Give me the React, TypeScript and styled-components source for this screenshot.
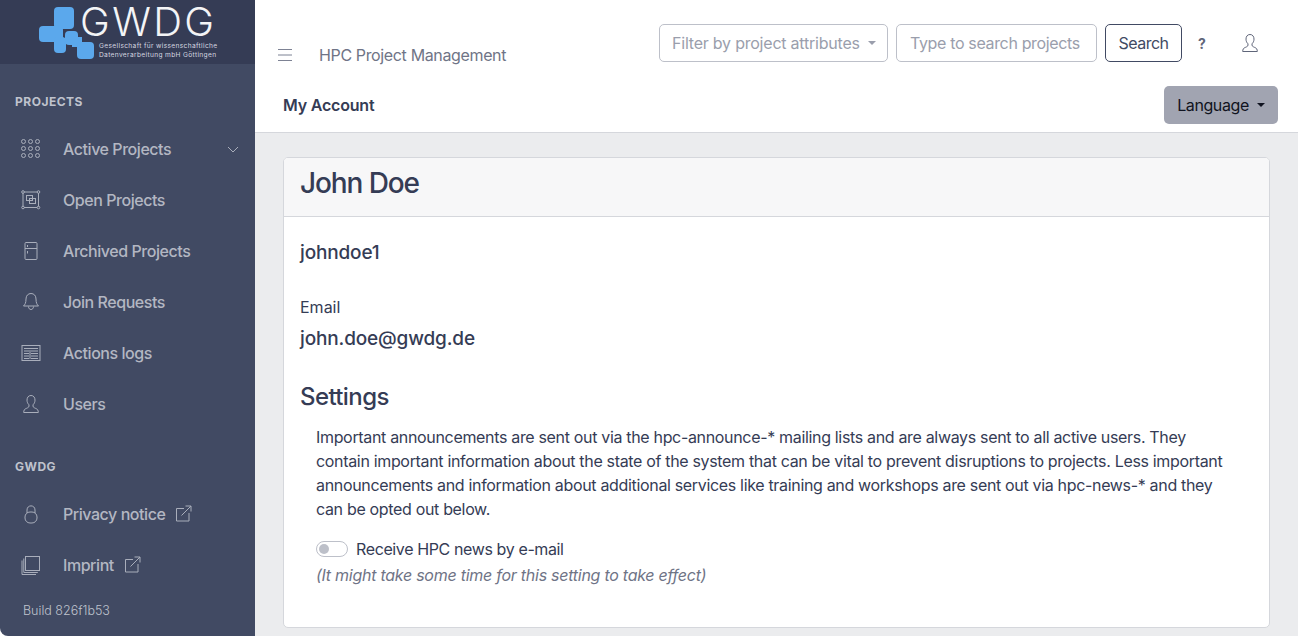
import React from 'react';
import styled, { createGlobalStyle } from 'styled-components';

const GlobalStyle = createGlobalStyle`
  html, body {
    margin: 0;
    padding: 0;
    height: 100%;
    background: #fff;
    overflow: hidden;
  }
  body {
    font-family: Inter, "Liberation Sans", sans-serif;
    color: #353c55;
  }
`;

const Page = styled.div`
  display: flex;
  width: 1298px;
  height: 636px;
`;

const Sidebar = styled.aside`
  width: 255px;
  flex: none;
  display: flex;
  flex-direction: column;
  background: #414a63;
  border-bottom-left-radius: 8px;
`;

const LogoBar = styled.div`
  height: 64px;
  flex: none;
  display: flex;
  align-items: flex-start;
  padding: 7px 0 0 39px;
  box-sizing: border-box;
  background: #353c55;
`;

const LogoText = styled.div`
  margin: -1px 0 0 -15px;
  color: #f3f4f6;
`;

const LogoName = styled.div`
  font-size: 40px;
  font-weight: 300;
  line-height: 32px;
  letter-spacing: 2.4px;
`;

const LogoSub = styled.div`
  margin: 4px 0 0 19px;
  font-size: 6.6px;
  line-height: 8.5px;
  letter-spacing: 0.35px;
  white-space: nowrap;
  color: #d5d8e0;
`;

const SectionLabel = styled.div`
  padding: 30px 0 13px 15px;
  font-size: 12px;
  font-weight: 700;
  line-height: 16px;
  letter-spacing: 0.5px;
  color: #bfc3cd;
`;

const NavList = styled.nav`
  display: flex;
  flex-direction: column;
`;

const NavItem = styled.a`
  height: 51px;
  display: flex;
  align-items: center;
  padding: 0 16px 0 21px;
  font-size: 16px;
  font-weight: 500;
  letter-spacing: -0.45px;
  color: #b3b7c2;
`;

const NavIcon = styled.svg`
  width: 20px;
  height: 20px;
  flex: none;
  margin-right: 22px;
  fill: none;
  stroke: #a9aebb;
  stroke-width: 1;
`;

const SmallIcon = styled.svg`
  width: 17px;
  height: 17px;
  flex: none;
  margin-left: 10px;
  fill: none;
  stroke: #a9aebb;
  stroke-width: 1;
`;

const Chevron = styled.svg`
  width: 12px;
  height: 12px;
  margin-left: auto;
  fill: none;
  stroke: #a9aebb;
  stroke-width: 1;
`;

const Build = styled.div`
  margin-top: 12px;
  padding-left: 23px;
  font-size: 12.5px;
  font-weight: 300;
  line-height: 18px;
  color: #bfc3cd;
`;

const Main = styled.main`
  flex: 1;
  min-width: 0;
  display: flex;
  flex-direction: column;
  background: #ebecee;
`;

const TopBar = styled.header`
  height: 86px;
  flex: none;
  display: flex;
  align-items: flex-start;
  padding: 24px 38px 0 22px;
  box-sizing: border-box;
  background: #fff;
`;

const Burger = styled.svg`
  width: 16px;
  height: 16px;
  margin-top: 23px;
  fill: none;
  stroke: #7d8294;
  stroke-width: 1;
`;

const AppTitle = styled.div`
  margin: 22px 0 0 26px;
  font-size: 16px;
  line-height: 19px;
  letter-spacing: -0.36px;
  color: #6f7486;
`;

const Tools = styled.div`
  margin-left: auto;
  display: flex;
  align-items: center;
  gap: 8px;
`;

const Control = styled.div<{ $width: number; $spacing: number; $pad: number }>`
  width: ${(p) => p.$width}px;
  height: 38px;
  box-sizing: border-box;
  display: flex;
  align-items: center;
  padding: 0 ${(p) => p.$pad}px;
  border: 1px solid #bdc0c9;
  border-radius: 5px;
  font-size: 16px;
  letter-spacing: ${(p) => p.$spacing}px;
  color: #9a9eac;
  white-space: nowrap;
`;

const Caret = styled.span<{ $color: string }>`
  margin-left: 8px;
  border-top: 4px solid ${(p) => p.$color};
  border-left: 4px solid transparent;
  border-right: 4px solid transparent;
`;

const SearchButton = styled.button`
  width: 77px;
  height: 38px;
  padding: 0;
  background: #fff;
  border: 1px solid #414a63;
  border-radius: 5px;
  font: inherit;
  font-size: 16px;
  letter-spacing: -0.5px;
  color: #414a63;
`;

const Help = styled.span`
  width: 24px;
  text-align: center;
  font-size: 14px;
  font-weight: 700;
  color: #5f6579;
`;

const UserButton = styled.svg`
  margin-left: 18px;
  width: 20px;
  height: 20px;
  fill: none;
  stroke: #5f6579;
  stroke-width: 1;
`;

const SubBar = styled.div`
  height: 46px;
  flex: none;
  display: flex;
  align-items: flex-start;
  justify-content: space-between;
  padding: 0 20px 0 28px;
  background: #fff;
  border-bottom: 1px solid #d5d7dc;
`;

const PageTitle = styled.h1`
  margin: 10px 0 0;
  font-size: 16px;
  font-weight: 600;
  line-height: 19px;
  letter-spacing: -0.2px;
  color: #353c55;
`;

const LanguageButton = styled.button`
  width: 114px;
  height: 38px;
  display: flex;
  align-items: center;
  justify-content: center;
  padding: 0;
  border: none;
  border-radius: 5px;
  background: #a1a4b1;
  font: inherit;
  font-size: 16px;
  letter-spacing: -0.4px;
  color: #101320;
`;

const Content = styled.div`
  flex: 1;
  padding: 24px 28px 8px 28px;
  min-height: 0;
`;

const Card = styled.section`
  height: 100%;
  box-sizing: border-box;
  background: #fff;
  border: 1px solid #d5d7dc;
  border-radius: 5px;
  overflow: hidden;
`;

const CardHeader = styled.div`
  height: 59px;
  box-sizing: border-box;
  padding: 0 16px 8px;
  display: flex;
  align-items: center;
  background: #f7f7f8;
  border-bottom: 1px solid #d5d7dc;
`;

const Name = styled.h2`
  margin: 0;
  font-size: 28px;
  font-weight: 500;
  letter-spacing: -1.1px;
  color: #353c55;
`;

const CardBody = styled.div`
  padding: 24px 16px 0;
`;

const Value = styled.div<{ $bottom?: number }>`
  font-size: 19px;
  font-weight: 500;
  line-height: 24px;
  letter-spacing: -0.15px;
  margin-bottom: ${(p) => p.$bottom ?? 0}px;
`;

const FieldLabel = styled.div`
  font-size: 16px;
  line-height: 24px;
  margin-bottom: 8px;
`;

const SettingsTitle = styled.h3`
  margin: 31px 0 0;
  font-size: 24px;
  font-weight: 500;
  line-height: 29px;
  letter-spacing: -0.6px;
  color: #353c55;
`;

const Settings = styled.div`
  padding: 14px 0 0 16px;
`;

const Paragraph = styled.p`
  margin: 0;
  max-width: 915px;
  font-size: 16px;
  line-height: 24px;
  letter-spacing: -0.33px;
`;

const SwitchRow = styled.div`
  display: flex;
  align-items: center;
  margin-top: 16px;
  font-size: 16px;
  line-height: 24px;
  letter-spacing: -0.38px;
`;

const Switch = styled.span`
  position: relative;
  width: 32px;
  height: 16px;
  box-sizing: border-box;
  margin-right: 8px;
  border: 1px solid #bdc0c9;
  border-radius: 8px;

  &::after {
    content: '';
    position: absolute;
    left: 2px;
    top: 2px;
    width: 10px;
    height: 10px;
    border-radius: 50%;
    background: #bdc0c9;
  }
`;

const Note = styled.div`
  margin-top: 2px;
  font-size: 16px;
  font-style: italic;
  line-height: 24px;
  letter-spacing: -0.26px;
  color: #6f7486;
`;

const UserPath = () => (
  <path d="M10 1.500c-2.600 0-4 2-4 4.600 0 2 .8 3.600 1.900 4.600.3.900.2 1.900-.4 2.500-1 .9-3.400 1.500-4.200 2.600-.5.7-.6 2-.6 2.700h14.600c0-.7-.1-2-.6-2.700-.8-1.100-3.200-1.700-4.200-2.600-.6-.6-.7-1.600-.4-2.500C13.200 9.700 14 8.100 14 6.100c0-2.600-1.400-4.600-4-4.600z" />
);

const ExternalIcon = () => (
  <SmallIcon viewBox="0 0 17 17">
    <path d="M9 3.500H1.500v12.500h12.500V8" />
    <path d="M6.500 10.500L16 1M10.500 1H16v5.500" />
  </SmallIcon>
);

const items = [
  {
    label: 'Active Projects',
    chevron: true,
    icon: (
      <>
        {[2.5, 9.5, 16.5].map((y) =>
          [2.5, 9.5, 16.5].map((x) => <circle key={`${x}-${y}`} cx={x} cy={y} r="2" />)
        )}
      </>
    ),
  },
  {
    label: 'Open Projects',
    icon: (
      <>
        <path d="M3 2h13M3 17.500h13M2 3v13.500M17.500 3v13.500" />
        <circle cx="2" cy="2" r="1.300" />
        <circle cx="17.500" cy="2" r="1.300" />
        <circle cx="2" cy="17.500" r="1.300" />
        <circle cx="17.500" cy="17.500" r="1.300" />
        <rect x="5.500" y="5.500" width="6" height="5" />
        <rect x="8.500" y="8.500" width="6" height="5" />
      </>
    ),
  },
  {
    label: 'Archived Projects',
    icon: (
      <>
        <rect x="4" y="1.500" width="12" height="17" rx="1" />
        <path d="M4 7.500h12M6.500 4v2M6.500 10v2.500" />
      </>
    ),
  },
  {
    label: 'Join Requests',
    icon: (
      <>
        <path d="M10 1.500c-3 0-5 2.200-5 5.500 0 4-1 5.500-2.500 7h15C16 12.500 15 11 15 7c0-3.300-2-5.500-5-5.500z" />
        <path d="M7.500 14.500c0 4 5 4 5 0" />
      </>
    ),
  },
  {
    label: 'Actions logs',
    icon: (
      <>
        <rect x="1" y="2.500" width="18" height="15" />
        <path d="M3 5.500h14M3 8h5M3 10.500h5M3 13h5M3 15.500h5M10 8h7M10 10.500h7M10 13h7M10 15.500h7M9 7v9" />
      </>
    ),
  },
  { label: 'Users', icon: <UserPath /> },
];

const LogoMark = () => (
  <svg width="56" height="52" viewBox="0 0 56 52" style={{ flex: 'none' }} fill="#5ba8ec">
    <rect x="15" y="0" width="20" height="22" rx="4" />
    <rect x="0" y="19" width="24" height="16" rx="4" />
    <rect x="15" y="30" width="12" height="16" rx="4" />
    <rect x="26" y="24" width="13" height="14" rx="4" />
    <rect x="33" y="30" width="10" height="10" />
    <rect x="38" y="35" width="17" height="17" rx="4" />
  </svg>
);

export default function App() {
  return (
    <Page>
      <GlobalStyle />
      <Sidebar>
        <LogoBar>
          <LogoMark />
          <LogoText>
            <LogoName>GWDG</LogoName>
            <LogoSub>
              Gesellschaft für wissenschaftliche
              <br />
              Datenverarbeitung mbH Göttingen
            </LogoSub>
          </LogoText>
        </LogoBar>
        <SectionLabel>PROJECTS</SectionLabel>
        <NavList>
          {items.map((item) => (
            <NavItem key={item.label}>
              <NavIcon viewBox="0 0 20 20">{item.icon}</NavIcon>
              {item.label}
              {item.chevron && (
                <Chevron viewBox="0 0 12 12">
                  <path d="M1 4l5 5 5-5" />
                </Chevron>
              )}
            </NavItem>
          ))}
        </NavList>
        <SectionLabel>GWDG</SectionLabel>
        <NavList>
          <NavItem>
            <NavIcon viewBox="0 0 20 20">
              <rect x="4" y="8" width="12" height="11" rx="5" />
              <path d="M6 9V6c0-5.500 8-5.500 8 0v3" />
            </NavIcon>
            Privacy notice
            <ExternalIcon />
          </NavItem>
          <NavItem>
            <NavIcon viewBox="0 0 20 20">
              <rect x="4.500" y="1.500" width="14" height="14" />
              <path d="M2.800 3.500v14h14M1 5.500v14h14" />
            </NavIcon>
            Imprint
            <ExternalIcon />
          </NavItem>
        </NavList>
        <Build>Build 826f1b53</Build>
      </Sidebar>
      <Main>
        <TopBar>
          <Burger viewBox="0 0 16 16">
            <path d="M1 2.500h14M1 8h14M1 13.500h14" />
          </Burger>
          <AppTitle>HPC Project Management</AppTitle>
          <Tools>
            <Control $width={229} $spacing={-0.22} $pad={12}>
              Filter by project attributes
              <Caret $color="#9a9eac" />
            </Control>
            <Control $width={201} $spacing={-0.35} $pad={13}>Type to search projects</Control>
            <SearchButton>Search</SearchButton>
            <Help>?</Help>
            <UserButton viewBox="0 0 20 20">
              <UserPath />
            </UserButton>
          </Tools>
        </TopBar>
        <SubBar>
          <PageTitle>My Account</PageTitle>
          <LanguageButton>
            Language
            <Caret $color="#101320" />
          </LanguageButton>
        </SubBar>
        <Content>
          <Card>
            <CardHeader>
              <Name>John Doe</Name>
            </CardHeader>
            <CardBody>
              <Value $bottom={30}>johndoe1</Value>
              <FieldLabel>Email</FieldLabel>
              <Value>john.doe@gwdg.de</Value>
              <SettingsTitle>Settings</SettingsTitle>
              <Settings>
                <Paragraph>
                  Important announcements are sent out via the hpc-announce-* mailing lists and are always sent to all
                  active users. They contain important information about the state of the system that can be vital to
                  prevent disruptions to projects. Less important announcements and information about additional
                  services like training and workshops are sent out via hpc-news-* and they can be opted out below.
                </Paragraph>
                <SwitchRow>
                  <Switch />
                  Receive HPC news by e-mail
                </SwitchRow>
                <Note>(It might take some time for this setting to take effect)</Note>
              </Settings>
            </CardBody>
          </Card>
        </Content>
      </Main>
    </Page>
  );
}
